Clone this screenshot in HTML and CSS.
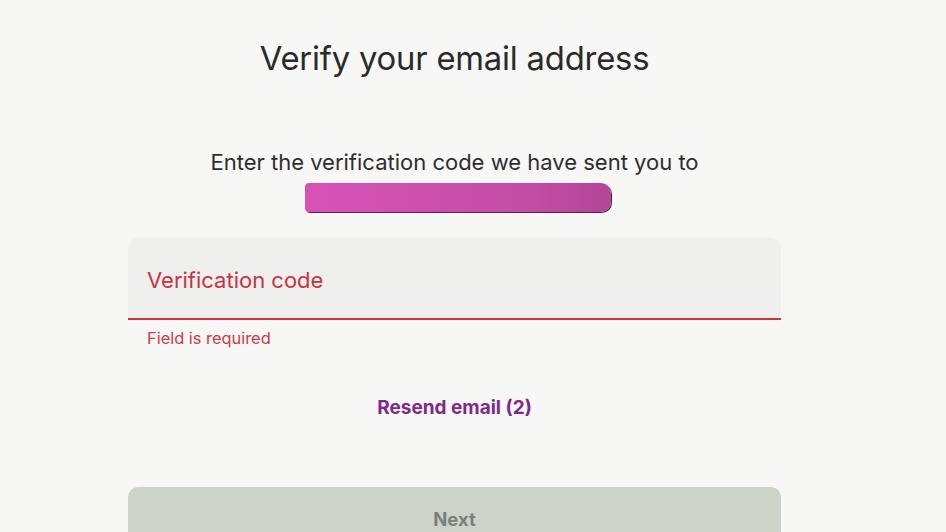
FILE: index.html
```html
<html lang="en">
<head>
    <meta charset="UTF-8">
    <meta name="viewport" content="width=device-width, initial-scale=1.0">
    <title>Verify email</title>
    <link rel="stylesheet" href="styles.css">
</head>
<body>
    <div class="page">
        <h1 class="title">Verify your email address</h1>
        <p class="subtitle">Enter the verification code we have sent you to</p>
        <div class="email-mask"></div>

        <div class="field">
            <div class="field-box">
                <span class="field-label">Verification code</span>
            </div>
            <div class="field-error">Field is required</div>
        </div>

        <a class="resend" href="#">Resend email (2)</a>

        <button class="next" disabled>Next</button>
    </div>
</body>
</html>
```

FILE: styles.css
```css
body {
    font-family: Inter, "Noto Sans", sans-serif;
    background-color: #f7f7f5;
    margin: 0;
    padding: 0;
    overflow: hidden;
}

.page {
    width: 653px;
    margin-left: 128px;
    display: flex;
    flex-direction: column;
    align-items: center;
}

.title {
    margin: 38px 0 0;
    font-size: 32.8px;
    font-weight: 400;
    color: #2a2a2a;
    letter-spacing: -0.2px;
}

.subtitle {
    margin: 71px 0 0;
    font-size: 22px;
    color: #2e2e2e;
}

.email-mask {
    width: 306px;
    height: 29px;
    margin-top: 8px;
    margin-left: 7px;
    border-radius: 4px 10px 10px 4px;
    background: linear-gradient(90deg, #d852b6, #c44ea6 70%, #b44597);
    box-shadow: 1px 1px 0 #5a2050;
}

.field {
    align-self: stretch;
    margin-top: 26px;
}

.field-box {
    height: 80px;
    background-color: #efefee;
    border-radius: 10px 10px 0 0;
    border-bottom: 2px solid #c8333f;
    display: flex;
    align-items: center;
    padding: 0 19px;
}

.field-label {
    font-size: 22px;
    color: #c8333f;
    margin-top: 3px;
}

.field-error {
    margin-top: 8px;
    padding-left: 19px;
    font-size: 16.4px;
    color: #cc3a47;
}

.resend {
    margin-top: 48px;
    font-size: 19px;
    font-weight: 700;
    color: #7d2a8c;
    text-decoration: none;
}

.next {
    align-self: stretch;
    margin-top: 68px;
    height: 64px;
    border: none;
    border-radius: 10px;
    background-color: #cdd3c9;
    color: #7b8079;
    font-family: inherit;
    font-size: 18.5px;
    font-weight: 700;
}
```
